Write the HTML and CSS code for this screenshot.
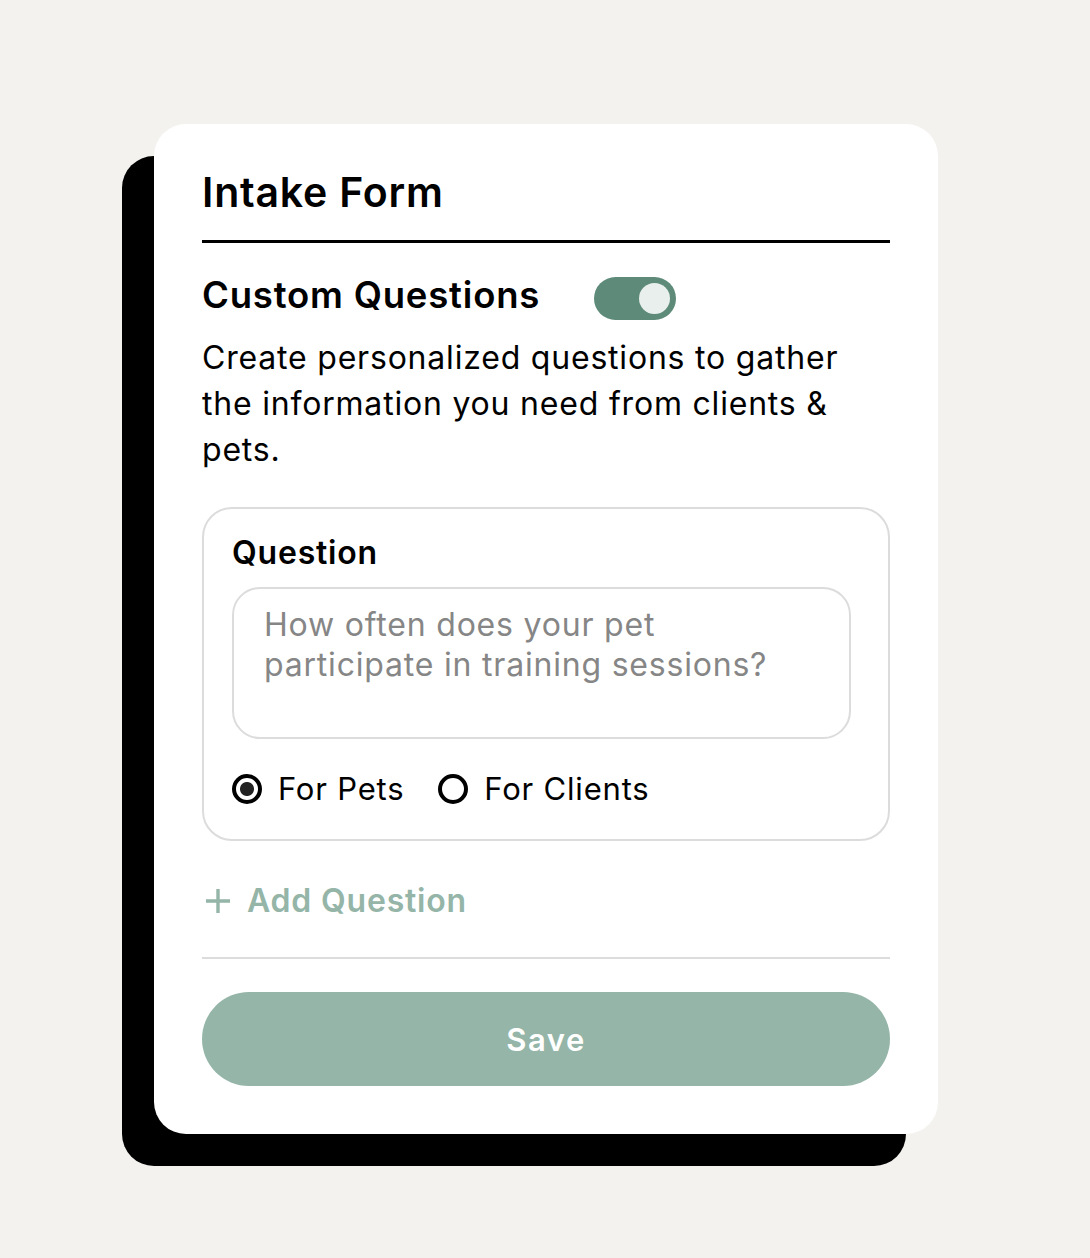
FILE: index.html
```
<!DOCTYPE html>
<html lang="en">
<head>
    <meta charset="UTF-8">
    <meta name="viewport" content="width=device-width, initial-scale=1.0">
    <link rel="stylesheet" href="styles.css">
    <title>Intake Form</title>
</head>
<body>
    <div class="backdrop">
        <div class="card">
            <h1 class="title">Intake Form</h1>

            <div class="section-head">
                <h2>Custom Questions</h2>
                <span class="toggle"><span class="knob"></span></span>
            </div>
            <p class="desc">Create personalized questions to gather the information you need from clients &amp; pets.</p>

            <div class="question-box">
                <div class="label">Question</div>
                <div class="textarea">How often does your pet participate in training sessions?</div>
                <div class="radios">
                    <span class="radio checked"><span class="dot"></span>For Pets</span>
                    <span class="radio"><span class="dot"></span>For Clients</span>
                </div>
            </div>

            <div class="add">
                <svg width="26" height="26" viewBox="0 0 26 26"><path d="M13 1v24M1 13h24" stroke="#94b5a7" stroke-width="3.4"/></svg>
                <span>Add Question</span>
            </div>

            <div class="footer">
                <button class="save">Save</button>
            </div>
        </div>
    </div>
</body>
</html>
```

FILE: styles.css
```
body {
    margin: 0;
    padding: 156px 0 93px 122px;
    background: #f3f2ee;
    font-family: Inter, "Noto Sans", sans-serif;
    letter-spacing: 0.05em;
    color: #000;
}

/* black block peeking out bottom-left of the card */
.backdrop {
    display: flex;
    width: 784px;
    background: #000;
    border-radius: 32px;
}

.card {
    width: 688px;
    margin: -32px -32px 32px 32px;
    padding: 40px 48px 48px;
    background: #fff;
    border-radius: 32px;
}

.title {
    margin: 0;
    font-size: 41px;
    font-weight: 600;
    line-height: 56px;
    padding-bottom: 20px;
    border-bottom: 3px solid #000;
}

.section-head {
    display: flex;
    align-items: center;
    gap: 54px;
    margin-top: 32px;
}

.section-head h2 {
    margin: 0 0 6px;
    font-size: 36.5px;
    font-weight: 600;
    line-height: 40px;
}

.toggle {
    width: 82px;
    height: 43px;
    border-radius: 22px;
    background: #5e8a79;
    display: flex;
    align-items: center;
    justify-content: flex-end;
    padding-right: 6px;
    box-sizing: border-box;
}

.knob {
    width: 31px;
    height: 31px;
    border-radius: 50%;
    background: #e8efec;
}

.desc {
    max-width: 660px;
    margin: 14px 0 0;
    font-size: 32px;
    line-height: 46px;
}

.question-box {
    margin-top: 34px;
    border: 2px solid #dcdcdc;
    border-radius: 30px;
    padding: 24px 37px 30px 28px;
}

.label {
    font-size: 32px;
    font-weight: 600;
    line-height: 40px;
}

.textarea {
    margin-top: 14px;
    height: 152px;
    box-sizing: border-box;
    border: 2px solid #dcdcdc;
    border-radius: 28px;
    padding: 16px 54px 0 30px;
    font-size: 32px;
    line-height: 40px;
    color: #868686;
}

.radios {
    display: flex;
    gap: 34px;
    margin-top: 30px;
}

.radio {
    display: flex;
    align-items: center;
    gap: 16px;
    font-size: 31px;
    line-height: 40px;
}

.dot {
    width: 30px;
    height: 30px;
    box-sizing: border-box;
    border: 4px solid #000;
    border-radius: 50%;
}

.radio.checked .dot {
    background: radial-gradient(circle, #222 6.5px, transparent 7.5px);
}

.add {
    display: flex;
    align-items: center;
    gap: 16px;
    margin-top: 38px;
    padding-left: 3px;
    color: #94b5a7;
    font-size: 32px;
    font-weight: 600;
    line-height: 44px;
}

.footer {
    margin-top: 34px;
    border-top: 2px solid #dcdcdc;
    padding-top: 33px;
}

.save {
    display: block;
    width: 100%;
    height: 94px;
    border: none;
    border-radius: 47px;
    background: #94b5a7;
    color: #fff;
    font-family: inherit;
    letter-spacing: 0.05em;
    font-size: 31px;
    font-weight: 600;
}
```
